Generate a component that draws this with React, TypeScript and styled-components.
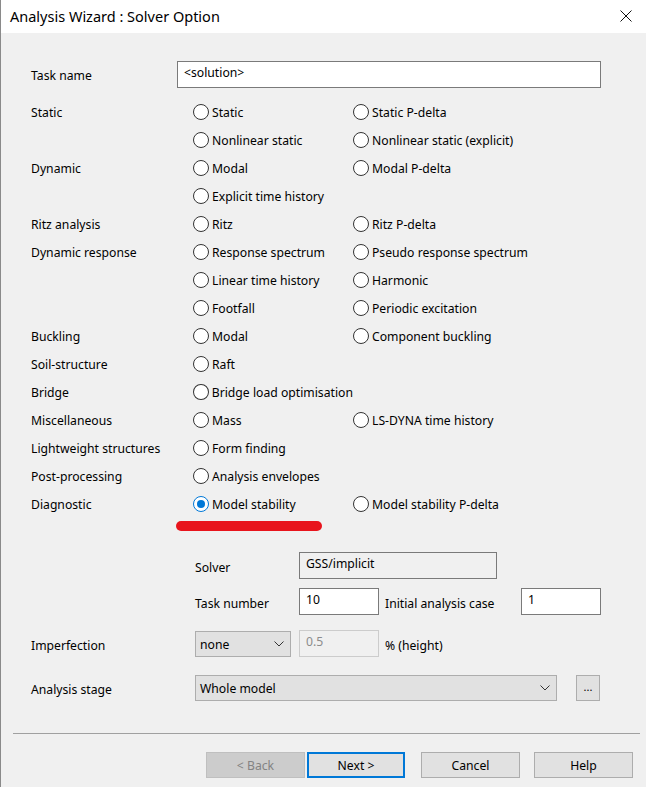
import styled, { createGlobalStyle } from 'styled-components';

const Global = createGlobalStyle`
    html, body {
        margin: 0;
        padding: 0;
        background: #f0f0f0;
    }
    * { box-sizing: border-box; }
`

const Window = styled.div`
    width: 646px;
    height: 787px;
    background: #f0f0f0;
    border-left: 1px solid #8a8a8a;
    font-family: "Noto Sans", "Open Sans", sans-serif;
    font-size: 12.2px;
    color: #000;
    display: flex;
    flex-direction: column;
    overflow: hidden;
`

const TitleBar = styled.div`
    height: 34px;
    background: #fff;
    display: flex;
    align-items: center;
    justify-content: space-between;
    padding: 0 14px 1px 9px;
`

const Title = styled.div`
    font-size: 14.5px;
    color: #000;
`

const Body = styled.div`
    flex: 1;
    padding: 28px 0 0 30px;
    display: flex;
    flex-direction: column;
`

const TaskRow = styled.div`
    display: flex;
    align-items: center;
    height: 26px;
`

const Label = styled.div<{ $w?: number; $low?: boolean }>`
    width: ${p => p.$w ?? 162}px;
    flex-shrink: 0;
    white-space: nowrap;
    padding-top: ${p => (p.$low ? 3 : 0)}px;
`

const TextBox = styled.div<{ $w: number; $disabled?: boolean; $grey?: boolean }>`
    width: ${p => p.$w}px;
    height: 27px;
    flex-shrink: 0;
    background: ${p => (p.$grey || p.$disabled ? '#f0f0f0' : '#fff')};
    border: 1px solid ${p => (p.$disabled ? '#cccccc' : '#7a7a7a')};
    color: ${p => (p.$disabled ? '#8c8c8c' : '#000')};
    padding: 2px 6px 0;
    line-height: 18px;
`

const Options = styled.div`
    margin-top: 11px;
    display: grid;
    grid-template-columns: 162px 160px 1fr;
    grid-auto-rows: 28px;
    align-items: center;
`

const Radio = styled.div`
    display: flex;
    align-items: center;
    gap: 3px;
    position: relative;
    white-space: nowrap;
`

const Circle = styled.span<{ $on?: boolean }>`
    width: 16px;
    height: 16px;
    border-radius: 50%;
    border: 1px solid ${p => (p.$on ? '#0078d7' : '#333')};
    background: #fff;
    display: flex;
    align-items: center;
    justify-content: center;
    &::after {
        content: '';
        width: 8px;
        height: 8px;
        border-radius: 50%;
        background: ${p => (p.$on ? '#0078d7' : 'transparent')};
    }
`

const Mark = styled.div`
    position: absolute;
    left: -17px;
    top: 25px;
    width: 146px;
    height: 10px;
    border-radius: 5px;
    background: #e8141c;
`

const Lower = styled.div`
    margin-top: 34px;
    display: flex;
    flex-direction: column;
`

const Row = styled.div<{ $h: number }>`
    display: flex;
    align-items: center;
    height: ${p => p.$h}px;
`

const Gap = styled.div<{ $w: number }>`
    width: ${p => p.$w}px;
    flex-shrink: 0;
`

const Select = styled.div<{ $w: number }>`
    width: ${p => p.$w}px;
    height: 26px;
    flex-shrink: 0;
    background: #e1e1e1;
    border: 1px solid #adadad;
    display: flex;
    align-items: center;
    justify-content: space-between;
    padding: 1px 6px 0 4px;
`

const SmallBtn = styled.div`
    width: 24px;
    height: 26px;
    background: #e1e1e1;
    border: 1px solid #adadad;
    display: flex;
    align-items: center;
    justify-content: center;
    padding-bottom: 3px;
    font-size: 11px;
`

const Separator = styled.div`
    margin: auto 6px 0 -18px;
    height: 1px;
    background: #a0a0a0;
`

const Buttons = styled.div`
    display: flex;
    padding: 18px 0 9px 175px;
`

const Button = styled.div<{ $kind?: 'disabled' | 'default'; $ml?: number }>`
    width: ${p => (p.$kind === 'default' ? 98 : 99)}px;
    height: 26px;
    margin-left: ${p => p.$ml ?? 0}px;
    display: flex;
    align-items: center;
    justify-content: center;
    background: ${p => (p.$kind === 'disabled' ? '#cccccc' : '#e1e1e1')};
    border: ${p => (p.$kind === 'default' ? '2px solid #0078d7' : p.$kind === 'disabled' ? '1px solid #bfbfbf' : '1px solid #adadad')};
    color: ${p => (p.$kind === 'disabled' ? '#838383' : '#000')};
`

const Chevron = () => (
    <svg width="10" height="6" viewBox="0 0 10 6"><path d="M0.5 0.5 L5 5 L9.5 0.5" fill="none" stroke="#333" strokeWidth="1" /></svg>
)

const rows: [string, string, string][] = [
    ['Static', 'Static', 'Static P-delta'],
    ['', 'Nonlinear static', 'Nonlinear static (explicit)'],
    ['Dynamic', 'Modal', 'Modal P-delta'],
    ['', 'Explicit time history', ''],
    ['Ritz analysis', 'Ritz', 'Ritz P-delta'],
    ['Dynamic response', 'Response spectrum', 'Pseudo response spectrum'],
    ['', 'Linear time history', 'Harmonic'],
    ['', 'Footfall', 'Periodic excitation'],
    ['Buckling', 'Modal', 'Component buckling'],
    ['Soil-structure', 'Raft', ''],
    ['Bridge', 'Bridge load optimisation', ''],
    ['Miscellaneous', 'Mass', 'LS-DYNA time history'],
    ['Lightweight structures', 'Form finding', ''],
    ['Post-processing', 'Analysis envelopes', ''],
    ['Diagnostic', 'Model stability', 'Model stability P-delta'],
]

const App = () => {
    return (
        <Window>
            <Global />
            <TitleBar>
                <Title>Analysis Wizard : Solver Option</Title>
                <svg width="12" height="12" viewBox="0 0 12 12"><path d="M0.5 0.5 L11.5 11.5 M11.5 0.5 L0.5 11.5" stroke="#111" strokeWidth="1" /></svg>
            </TitleBar>
            <Body>
                <TaskRow>
                    <Label $w={146} $low>Task name</Label>
                    <TextBox $w={424}>&lt;solution&gt;</TextBox>
                </TaskRow>
                <Options>
                    {rows.map((r, i) => {
                        const last = i === rows.length - 1
                        return [
                            <Label key={i + 'l'}>{r[0]}</Label>,
                            <Radio key={i + 'a'}>
                                <Circle $on={last} />{r[1]}
                                {last && <Mark />}
                            </Radio>,
                            r[2] ? <Radio key={i + 'b'}><Circle />{r[2]}</Radio> : <div key={i + 'b'} />,
                        ]
                    })}
                </Options>
                <Lower>
                    <Row $h={27}>
                        <Gap $w={164} />
                        <Label $w={104} $low>Solver</Label>
                        <TextBox $w={198} $grey>GSS/implicit</TextBox>
                    </Row>
                    <Row $h={27} style={{ marginTop: 9 }}>
                        <Gap $w={164} />
                        <Label $w={104} $low>Task number</Label>
                        <TextBox $w={80}>10</TextBox>
                        <Gap $w={6} />
                        <Label $w={136} $low>Initial analysis case</Label>
                        <TextBox $w={80}>1</TextBox>
                    </Row>
                    <Row $h={27} style={{ marginTop: 15 }}>
                        <Label $w={164} $low>Imperfection</Label>
                        <Select $w={96}>none<Chevron /></Select>
                        <Gap $w={8} />
                        <TextBox $w={80} $disabled>0.5</TextBox>
                        <Gap $w={6} />
                        <Label $w={80} $low>% (height)</Label>
                    </Row>
                    <Row $h={27} style={{ marginTop: 17 }}>
                        <Label $w={164} $low>Analysis stage</Label>
                        <Select $w={362}>Whole model<Chevron /></Select>
                        <Gap $w={19} />
                        <SmallBtn>...</SmallBtn>
                    </Row>
                </Lower>
                <Separator style={{ marginTop: 32 }} />
                <Buttons>
                    <Button $kind="disabled">&lt; Back</Button>
                    <Button $kind="default" $ml={2}>Next &gt;</Button>
                    <Button $ml={16}>Cancel</Button>
                    <Button $ml={14}>Help</Button>
                </Buttons>
            </Body>
        </Window>
    )
}

export default App
